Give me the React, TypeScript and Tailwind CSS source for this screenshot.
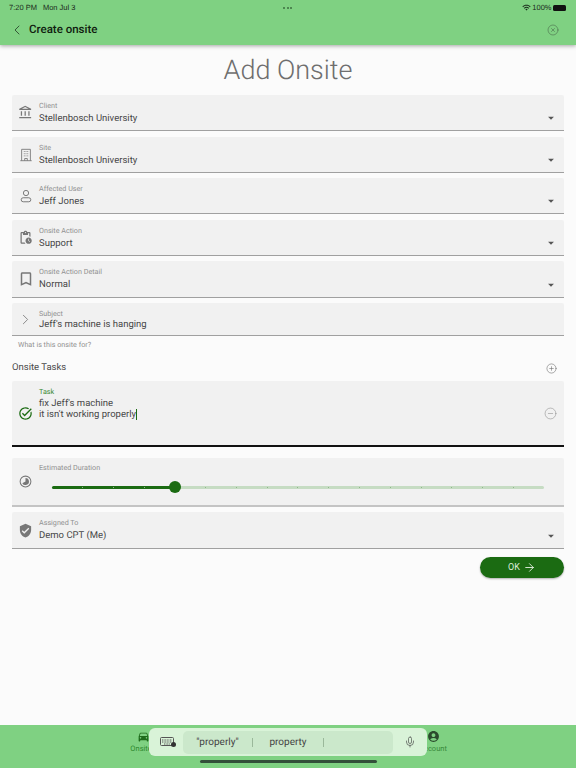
import React, { ReactElement, ReactNode } from 'react'
import {
    MdAccountCircle,
    MdArrowDropDown,
    MdBookmarkBorder,
    MdDirectionsCar,
    MdOutlineAccountBalance,
    MdOutlinePendingActions,
    MdTaskAlt,
    MdVerifiedUser,
    MdWifi,
} from 'react-icons/md'
import { ArrowRight, ChevronLeft, ChevronRight, CircleMinus, CirclePlus, CircleX, Mic } from 'lucide-react'

const font = 'font-["Roboto",sans-serif] [text-rendering:geometricPrecision] antialiased'

function BuildingIcon(): ReactElement {
    return (
        <svg width="14" height="14" viewBox="0 0 16 16" fill="none" stroke="#777" strokeWidth="1">
            <path d="M3 14.5V1.5h10v13M1.5 14.5h13M6.5 14.5v-2.5h3v2.5" />
            <path d="M5.5 4h1M7.5 4h1M9.5 4h1M5.5 6.5h1M7.5 6.5h1M9.5 6.5h1M5.5 9h1M7.5 9h1M9.5 9h1" />
        </svg>
    )
}

function PersonIcon(): ReactElement {
    return (
        <svg width="14" height="14" viewBox="0 0 16 16" fill="none" stroke="#777" strokeWidth="1.1">
            <circle cx="8" cy="4.6" r="3" />
            <rect x="2.5" y="10" width="11" height="4.6" rx="2.3" />
        </svg>
    )
}

function ClockIcon(): ReactElement {
    return (
        <svg width="13" height="13" viewBox="0 0 14 14">
            <circle cx="7" cy="7" r="5.8" fill="none" stroke="#777" strokeWidth="1.1" />
            <path d="M7 3.2A3.8 3.8 0 1 1 3.6 8.8L7 7Z" fill="#777" />
        </svg>
    )
}

function KeyboardIcon(): ReactElement {
    return (
        <svg width="17" height="11" viewBox="0 0 17 11" fill="none">
            <rect x="0.5" y="0.5" width="13" height="8" rx="1" stroke="#555" />
            <path d="M2 3h10M2 5h10M4 7h6" stroke="#555" strokeWidth="1" strokeDasharray="1 0.6" />
            <circle cx="13.5" cy="7.5" r="2.5" fill="#333" />
        </svg>
    )
}

type FieldProps = {
    icon: ReactNode
    label: string
    value: string
    rowClass: string
    dropdown?: boolean
}

function Field({ icon, label, value, rowClass, dropdown = true }: FieldProps): ReactElement {
    return (
        <div className={`flex mx-3 bg-[#f1f1f1] border-b border-[#a0a0a0] rounded-t-[2px] ${rowClass}`}>
            <div className="w-[27px] flex items-center justify-center shrink-0">{icon}</div>
            <div className="flex-1 pt-[6px]">
                <div className="text-[7.2px] leading-[9px] text-[#909090]">{label}</div>
                <div className={`text-[9.5px] leading-[14px] text-[#474747] ${dropdown ? 'mt-[2px]' : 'mt-0'}`}>{value}</div>
            </div>
            {dropdown && (
                <div className="w-[26px] flex items-end justify-center pb-[5px]">
                    <MdArrowDropDown size={14} color="#555" />
                </div>
            )}
        </div>
    )
}

function DurationSlider(): ReactElement {
    return (
        <div className="relative h-[3px] mt-[13.5px] ml-[13px] w-[492px] bg-[#c6dcc3] rounded-full">
            <div className="absolute left-0 top-0 h-[3px] w-[123px] bg-[#1b6b12] rounded-full" />
            <div className="absolute inset-x-0 top-[1px] flex justify-between px-[30px]">
                {Array.from({ length: 15 }).map((_, i) => (
                    <span key={i} className="w-[1px] h-[1px] bg-[#8fb88a]" />
                ))}
            </div>
            <div className="absolute left-[117px] top-[-4.5px] w-[12px] h-[12px] rounded-full bg-[#1b6b12]" />
        </div>
    )
}

function App(): ReactElement {
    return (
        <div className={`relative w-[576px] h-[768px] flex flex-col bg-[#fbfbfb] overflow-hidden ${font}`}>
            <header className="h-[45px] bg-[#7fd182] shadow-[0_1px_4px_rgba(0,0,0,0.35)] z-10 shrink-0">
                <div className="h-[14px] flex items-center justify-between pl-[9px] pr-[10px] pt-[1px] text-[7.5px] font-medium text-[#1c2b1c] font-['Liberation_Sans',sans-serif]">
                    <div className="flex gap-[6px] w-[150px]">
                        <span>7:20 PM</span>
                        <span>Mon Jul 3</span>
                    </div>
                    <div className="flex gap-[1.5px]">
                        <span className="w-[2px] h-[2px] rounded-full bg-[#3d6e3f]" />
                        <span className="w-[2px] h-[2px] rounded-full bg-[#3d6e3f]" />
                        <span className="w-[2px] h-[2px] rounded-full bg-[#3d6e3f]" />
                    </div>
                    <div className="flex items-center justify-end gap-[1.5px] w-[150px]">
                        <MdWifi size={9} />
                        <span>100%</span>
                        <span className="w-[13px] h-[6px] rounded-[1.5px] bg-[#111]" />
                    </div>
                </div>
                <div className="h-[31px] flex items-center justify-between pl-[9px] pr-[17px]">
                    <div className="flex items-center gap-[4px]">
                        <ChevronLeft size={16} color="#2f4f32" strokeWidth={1.4} />
                        <span className="text-[11.5px] font-medium text-[#10200f]">Create onsite</span>
                    </div>
                    <CircleX size={12} color="#4a6b4c" strokeWidth={1.2} />
                </div>
            </header>

            <h1 className="text-[27px] leading-[32px] font-light mt-[9px] mb-[9px] text-center text-[#6e6e6e]">Add Onsite</h1>

            <Field
                icon={<MdOutlineAccountBalance size={15} color="#777" />}
                label="Client"
                value="Stellenbosch University"
                rowClass="h-[36px]"
            />
            <div className="h-[6px] shrink-0" />
            <Field icon={<BuildingIcon />} label="Site" value="Stellenbosch University" rowClass="h-[36px]" />
            <div className="h-[5px] shrink-0" />
            <Field icon={<PersonIcon />} label="Affected User" value="Jeff Jones" rowClass="h-[36px]" />
            <div className="h-[6px] shrink-0" />
            <Field
                icon={<MdOutlinePendingActions size={15} color="#777" />}
                label="Onsite Action"
                value="Support"
                rowClass="h-[36px]"
            />
            <div className="h-[5px] shrink-0" />
            <Field
                icon={<MdBookmarkBorder size={18} color="#777" />}
                label="Onsite Action Detail"
                value="Normal"
                rowClass="h-[37px]"
            />
            <div className="h-[5px] shrink-0" />
            <Field
                icon={<ChevronRight size={17} color="#777" strokeWidth={1.2} />}
                label="Subject"
                value="Jeff's machine is hanging"
                rowClass="h-[33px]"
                dropdown={false}
            />
            <div className="ml-[18px] mt-[4px] text-[7.2px] leading-[10px] text-[#909090]">What is this onsite for?</div>

            <div className="flex items-center justify-between mx-3 mt-[11px] h-[14px]">
                <span className="text-[9.5px] text-[#4a4a4a]">Onsite Tasks</span>
                <CirclePlus size={11} color="#666" strokeWidth={1.2} className="mr-[7px]" />
            </div>

            <div className="flex mx-3 mt-[6px] h-[66px] bg-[#f1f1f1] border-b-2 border-[#111] rounded-t-[2px]">
                <div className="w-[27px] flex items-center justify-center shrink-0">
                    <MdTaskAlt size={15} color="#1b6b12" />
                </div>
                <div className="flex-1 pt-[6px]">
                    <div className="text-[7.2px] leading-[9px] text-[#3b8a32]">Task</div>
                    <div className="text-[9.5px] leading-[11px] text-[#474747] mt-[1.5px]">
                        fix Jeff's machine
                        <br />
                        <span className="border-r border-[#1b6b12]">it isn't working properly</span>
                    </div>
                </div>
                <div className="w-[27px] flex items-center justify-center">
                    <CircleMinus size={13} color="#888" strokeWidth={1} />
                </div>
            </div>

            <div className="flex mx-3 mt-[11px] h-[49px] bg-[#f1f1f1] border-b-2 border-[#c4c4c4] rounded-t-[2px]">
                <div className="w-[27px] flex items-center justify-center shrink-0">
                    <ClockIcon />
                </div>
                <div className="flex-1 pt-[5px]">
                    <div className="text-[7.2px] leading-[9px] text-[#909090]">Estimated Duration</div>
                    <DurationSlider />
                </div>
            </div>
            <div className="h-[5px] shrink-0" />
            <Field
                icon={<MdVerifiedUser size={15} color="#777" />}
                label="Assigned To"
                value="Demo CPT (Me)"
                rowClass="h-[37px]"
            />

            <div className="flex justify-end mx-3 mt-[8px]">
                <button className="w-[84px] h-[21px] rounded-full bg-[#1b6b12] flex items-center justify-center gap-[3px] text-[9px] text-[#dcecd9] shadow-[0_1px_2px_rgba(0,0,0,0.3)]">
                    OK
                    <ArrowRight size={13} color="#f0f7ee" strokeWidth={1.6} />
                </button>
            </div>

            <nav className="mt-auto h-[43px] bg-[#7fd182] flex justify-center gap-[260px] pt-[5px] shrink-0 text-[7.5px]">
                <div className="flex flex-col items-center w-[30px] text-[#2f8a30]">
                    <MdDirectionsCar size={13} color="#1f6b1b" />
                    <span>Onsites</span>
                </div>
                <div className="flex flex-col items-center w-[30px] text-[#3a8a3c]">
                    <MdAccountCircle size={13} color="#2c4a2d" />
                    <span>Account</span>
                </div>
            </nav>

            {/* floating keyboard shortcut bar sits over the tab bar */}
            <div className="absolute left-[149px] top-[728px] w-[278px] h-[28px] rounded-[6px] bg-[#d9f3d8] flex items-center z-20">
                <div className="w-[34px] flex justify-center pl-[5px]">
                    <KeyboardIcon />
                </div>
                <div className="w-[210px] h-[23px] rounded-[5px] bg-[#cbe8cb] flex items-center text-[10px] text-[#444]">
                    <span className="w-[69px] text-center">"properly"</span>
                    <span className="w-[1px] h-[9px] bg-[#9ab89a]" />
                    <span className="w-[70px] text-center">property</span>
                    <span className="w-[1px] h-[9px] bg-[#9ab89a]" />
                </div>
                <div className="flex-1 flex justify-center">
                    <Mic size={12} color="#444" strokeWidth={1.3} />
                </div>
            </div>
            <div className="absolute left-[200px] top-[760px] w-[177px] h-[3px] rounded-full bg-[#33503a] z-20" />
        </div>
    )
}

export default App
